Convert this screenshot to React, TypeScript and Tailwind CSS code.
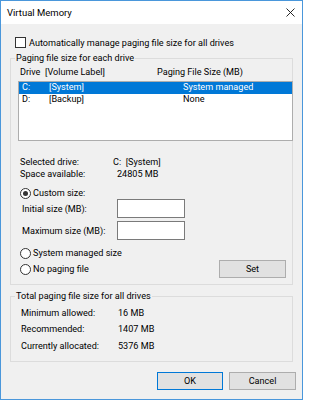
import React from 'react';

const font = { fontFamily: 'Roboto, "Liberation Sans", sans-serif' };

const Radio = ({ checked, label }: { checked?: boolean; label: string }) => (
  <div className="flex items-center gap-[2px]">
    <span className="flex h-[11px] w-[11px] items-center justify-center rounded-full border border-[#333] bg-white">
      {checked && <span className="h-[5px] w-[5px] rounded-full bg-[#333]" />}
    </span>
    <span>{label}</span>
  </div>
);

const Group = ({ title, className, children }: { title: string; className?: string; children: React.ReactNode }) => (
  <fieldset className={`border border-[#dcdcdc] ${className ?? ''}`}>
    <legend className="ml-[4px] px-[1px] h-[12px] leading-[12px]">{title}</legend>
    {children}
  </fieldset>
);

export default function App() {
  const drives = [
    { letter: 'C:', label: '[System]', size: 'System managed', selected: true },
    { letter: 'D:', label: '[Backup]', size: 'None', selected: false },
  ];

  return (
    <div className="w-[303px] h-[400px] bg-[#f0f0f0] text-[9.1px] leading-[12px] text-black flex flex-col border border-t-0 border-[#4a97db]" style={font}>
      {/* title bar */}
      <div className="h-[24px] bg-white flex items-center justify-between pl-[6px] pr-[6px] border-t border-[#4a97db]">
        <span className="text-[9.5px]">Virtual Memory</span>
        <svg width="9" height="9" viewBox="0 0 9 9" className="mr-[1px]">
          <path d="M0.5 0.5 L8.5 8.5 M8.5 0.5 L0.5 8.5" stroke="#111" strokeWidth="0.9" />
        </svg>
      </div>

      <div className="flex flex-col px-[9px]">
        {/* auto manage */}
        <div className="mt-[12px] h-[13px] flex items-center gap-[3px] pl-[5px]">
          <span className="h-[11px] w-[11px] border border-[#333] bg-white" />
          <span>Automatically manage paging file size for all drives</span>
        </div>

        <Group title="Paging file size for each drive" className="mt-[3px] pb-[6px] pr-[6px]">
          <div className="mt-[2px] h-[12px] flex items-center pl-[9px]">
            <span className="w-[25px]">Drive</span>
            <span className="w-[112px]">[Volume Label]</span>
            <span>Paging File Size (MB)</span>
          </div>

          <div className="mt-[3px] ml-[7px] -mr-[7px] h-[60px] border border-[#adadad] bg-white">
            {drives.map((d) => (
              <div
                key={d.letter}
                className={`h-[11.5px] leading-[11px] flex items-center pl-[3px] ${d.selected ? 'bg-[#0078d7] text-white' : ''}`}
              >
                <span className="w-[27px]">{d.letter}</span>
                <span className="w-[134px]">{d.label}</span>
                <span>{d.size}</span>
              </div>
            ))}
          </div>

          <div className="mt-[15px] h-[12px] flex items-center pl-[9px]">
            <span className="w-[93px]">Selected drive:</span>
            <span>C:&nbsp;&nbsp;[System]</span>
          </div>
          <div className="h-[12px] flex items-center pl-[9px]">
            <span className="w-[97px]">Space available:</span>
            <span>24805 MB</span>
          </div>

          <div className="mt-[7px] h-[12px] flex items-center pl-[9px]">
            <Radio checked label="Custom size:" />
          </div>
          <div className="h-[19px] flex items-center pl-[11px]">
            <span className="w-[95px]">Initial size (MB):</span>
            <span className="h-[19px] w-[68px] border border-[#7a7a7a] bg-white" />
          </div>
          <div className="mt-[3px] h-[19px] flex items-center pl-[11px]">
            <span className="w-[95px]">Maximum size (MB):</span>
            <span className="h-[19px] w-[68px] border border-[#7a7a7a] bg-white" />
          </div>

          <div className="mt-[7px] h-[12px] flex items-center pl-[9px]">
            <Radio label="System managed size" />
          </div>
          <div className="mt-[1px] h-[18px] flex items-center justify-between pl-[9px]">
            <Radio label="No paging file" />
            <button className="h-[18px] w-[67px] border border-[#adadad] bg-[#e1e1e1]">Set</button>
          </div>
        </Group>

        <Group title="Total paging file size for all drives" className="mt-[5px] pb-[7px]">
          <div className="pt-[2.5px] pl-[10px] flex flex-col">
            {[
              ['Minimum allowed:', '16 MB'],
              ['Recommended:', '1407 MB'],
              ['Currently allocated:', '5376 MB'],
            ].map(([k, v]) => (
              <div key={k} className="h-[16.5px] flex items-center">
                <span className="w-[97px]">{k}</span>
                <span>{v}</span>
              </div>
            ))}
          </div>
        </Group>

        <div className="mt-[9.5px] flex justify-end gap-[6px] -mr-[3px]">
          <button className="h-[18px] w-[66px] border border-[#0078d7] bg-[#e1e1e1]">OK</button>
          <button className="h-[18px] w-[67px] border border-[#adadad] bg-[#e1e1e1]">Cancel</button>
        </div>
      </div>
    </div>
  );
}
